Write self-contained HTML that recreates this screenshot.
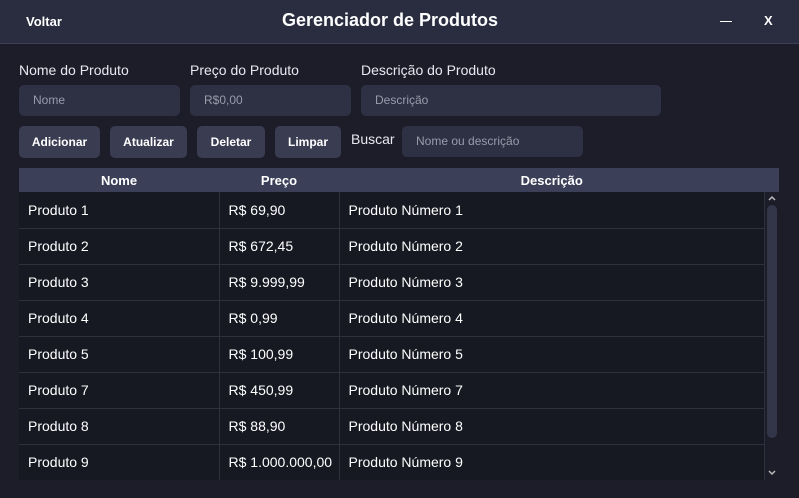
<html><head><style>
body{margin:0;width:799px;height:498px;background:#1c1d29;font-family:"Liberation Sans","DejaVu Sans",sans-serif;color:#fff;position:relative;overflow:hidden}
.a{position:absolute}
.bar{left:0;top:0;width:799px;height:43px;background:#2a2c3f;border-bottom:1px solid #3d3f58}
.lbl{font-size:14px;color:#e8e8f0}
.in{background:#2e3043;border-radius:5px;height:31px;font-size:12px;color:#9a9cab;line-height:31px;padding-left:14px;box-sizing:border-box}
.btn{background:#3a3c52;border-radius:5px;height:32px;top:126px;font-size:12px;font-weight:bold;text-align:center;line-height:32px}
table{border-collapse:collapse;font-size:14px}
td{height:36px;border-bottom:1px solid #2e303e;border-right:1px solid #2e303e;padding:0 0 0 9px;background:#171922}
th{height:24px;background:#3c3f58;font-size:13px;padding:0}
</style></head><body>
<div class="a bar"></div>
<div class="a" style="left:26px;top:14px;font-size:13px;font-weight:bold">Voltar</div>
<div class="a" style="left:0;width:780px;top:10px;text-align:center;font-size:18px;font-weight:bold">Gerenciador de Produtos</div>
<div class="a" style="left:720px;top:21px;width:12px;height:1px;background:#fff"></div>
<div class="a" style="left:764px;top:13px;font-size:13px;font-weight:bold">X</div>
<div class="a lbl" style="left:19px;top:62px">Nome do Produto</div>
<div class="a lbl" style="left:190px;top:62px">Preço do Produto</div>
<div class="a lbl" style="left:361px;top:62px">Descrição do Produto</div>
<div class="a in" style="left:19px;top:85px;width:161px">Nome</div>
<div class="a in" style="left:190px;top:85px;width:161px">R$0,00</div>
<div class="a in" style="left:361px;top:85px;width:300px">Descrição</div>
<div class="a btn" style="left:19px;width:81px">Adicionar</div>
<div class="a btn" style="left:110px;width:77px">Atualizar</div>
<div class="a btn" style="left:197px;width:68px">Deletar</div>
<div class="a btn" style="left:275px;width:66px">Limpar</div>
<div class="a lbl" style="left:351px;top:131px">Buscar</div>
<div class="a in" style="left:402px;top:126px;width:181px">Nome ou descrição</div>
<div class="a" style="left:19px;top:168px;width:760px;height:312px;overflow:hidden;background:#171922">
<table style="width:746px;table-layout:fixed">
<tr><th style="width:200px">Nome</th><th style="width:120px">Preço</th><th>Descrição</th></tr>
<tr><td>Produto 1</td><td>R$ 69,90</td><td>Produto Número 1</td></tr>
<tr><td>Produto 2</td><td>R$ 672,45</td><td>Produto Número 2</td></tr>
<tr><td>Produto 3</td><td>R$ 9.999,99</td><td>Produto Número 3</td></tr>
<tr><td>Produto 4</td><td>R$ 0,99</td><td>Produto Número 4</td></tr>
<tr><td>Produto 5</td><td>R$ 100,99</td><td>Produto Número 5</td></tr>
<tr><td>Produto 7</td><td>R$ 450,99</td><td>Produto Número 7</td></tr>
<tr><td>Produto 8</td><td>R$ 88,90</td><td>Produto Número 8</td></tr>
<tr><td>Produto 9</td><td>R$ 1.000.000,00</td><td>Produto Número 9</td></tr>
</table>
<div class="a" style="left:746px;top:0;width:14px;height:24px;background:#3c3f58"></div>
<div class="a" style="left:746px;top:24px;width:14px;height:288px;background:#1c1d29"></div>
<div class="a" style="left:748px;top:37px;width:10px;height:233px;background:#333548;border-radius:5px"></div>
<svg class="a" style="left:748px;top:26px" width="10" height="8"><path d="M2 6 L5 3 L8 6" stroke="#bbb" stroke-width="1.5" fill="none"/></svg>
<svg class="a" style="left:748px;top:301px" width="10" height="8"><path d="M2 2 L5 5 L8 2" stroke="#bbb" stroke-width="1.5" fill="none"/></svg>
</div>
</body></html>
